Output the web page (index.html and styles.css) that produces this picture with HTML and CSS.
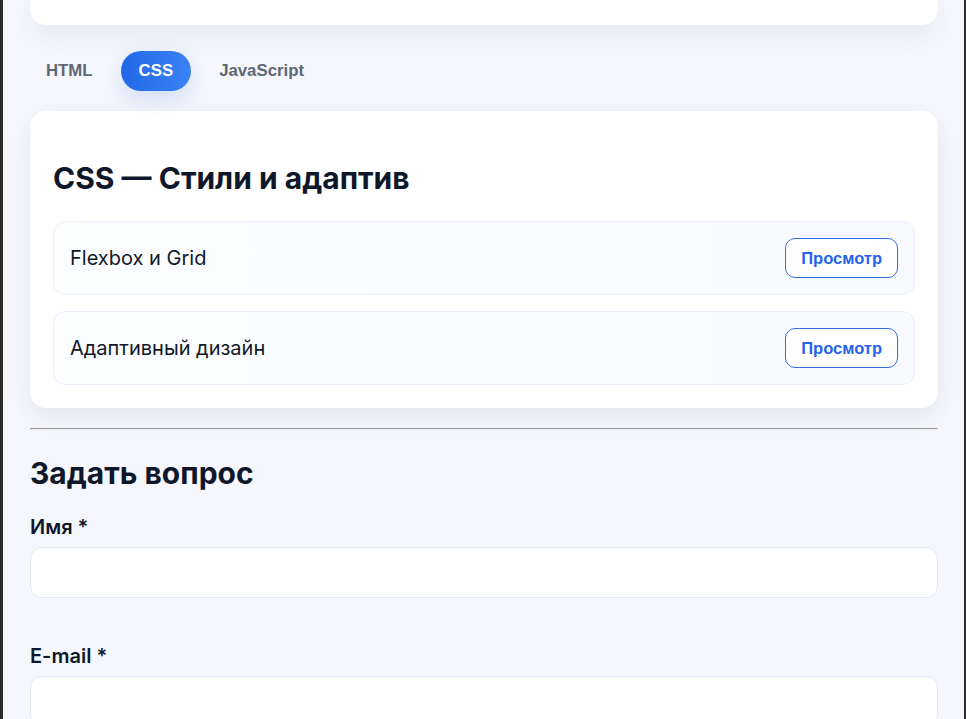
FILE: index.html
```html
<!DOCTYPE html>
<html lang="ru">
<head>
<meta charset="utf-8">
<title>Курсы</title>
<link rel="stylesheet" href="styles.css">
</head>
<body>
<div class="viewport">
  <div class="card card-prev"></div>

  <nav class="tabs">
    <button class="tab">HTML</button>
    <button class="tab tab-active">CSS</button>
    <button class="tab">JavaScript</button>
  </nav>

  <section class="card topic">
    <h2 class="topic-title">CSS — Стили и адаптив</h2>
    <ul class="lessons">
      <li class="lesson">
        <span class="lesson-name">Flexbox и Grid</span>
        <button class="btn-view">Просмотр</button>
      </li>
      <li class="lesson">
        <span class="lesson-name">Адаптивный дизайн</span>
        <button class="btn-view">Просмотр</button>
      </li>
    </ul>
  </section>

  <hr class="divider">

  <section class="ask">
    <h2 class="ask-title">Задать вопрос</h2>
    <form class="ask-form">
      <div class="field">
        <label class="field-label" for="name">Имя *</label>
        <input class="field-input" id="name" type="text">
      </div>
      <div class="field">
        <label class="field-label" for="email">E-mail *</label>
        <input class="field-input" id="email" type="email">
      </div>
    </form>
  </section>
</div>
</body>
</html>
```

FILE: styles.css
```css
html, body {
  margin: 0;
  padding: 0;
}

body {
  background: #2b2b2b;
  font-family: Inter, "Noto Sans", sans-serif;
  color: #0f172a;
}

.viewport {
  margin: 0 2px 0 3px;
  min-height: 100vh;
  background: #f5f7fc;
  padding: 0 26px 40px 27px;
  box-sizing: border-box;
}

.card {
  background: #ffffff;
  border-radius: 16px;
  box-shadow: 0 10px 28px rgba(30, 50, 100, 0.08);
}

.card-prev {
  height: 25px;
  border-radius: 0 0 16px 16px;
}

.tabs {
  display: flex;
  gap: 10px;
  margin: 26px 0 20px -2px;
}

.tab {
  font-family: "Liberation Sans", Arial, sans-serif;
  font-size: 16.8px;
  font-weight: 700;
  line-height: 18px;
  color: #5f6673;
  background: transparent;
  border: 0;
  border-radius: 20px;
  padding: 11px 18px;
  cursor: pointer;
}

.tab-active {
  color: #ffffff;
  background: linear-gradient(90deg, #2168e6, #3b82f6);
  box-shadow: 0 8px 22px rgba(37, 99, 235, 0.18);
}

.topic {
  padding: 24px 23px 23px;
}

.topic-title,
.ask-title {
  font-size: 30px;
  font-weight: 700;
  line-height: 36px;
  color: #0f172a;
  margin: 25px 0 25px;
}

.lessons {
  list-style: none;
  margin: 0;
  padding: 0;
  display: flex;
  flex-direction: column;
  gap: 16px;
}

.lesson {
  display: flex;
  align-items: center;
  justify-content: space-between;
  padding: 16px;
  border: 1px solid #eaeff9;
  border-radius: 12px;
  background: linear-gradient(90deg, #fcfdff, #f8faff);
}

.lesson-name {
  font-size: 20px;
  color: #111827;
}

.btn-view {
  font-family: "Liberation Sans", Arial, sans-serif;
  font-size: 16.5px;
  font-weight: 700;
  line-height: 18px;
  color: #2563eb;
  background: #ffffff;
  border: 1px solid #2f6fe0;
  border-radius: 10px;
  padding: 10px 15px;
  cursor: pointer;
}

.divider {
  margin: 20px 0 0;
}

.ask-title {
  margin: 25px 0 24px;
}

.ask-form {
  display: flex;
  flex-direction: column;
  gap: 46px;
}

.field {
  display: flex;
  flex-direction: column;
  gap: 8px;
}

.field-label {
  font-size: 20px;
  font-weight: 600;
  line-height: 24px;
  color: #0f172a;
}

.field-input {
  height: 51px;
  box-sizing: border-box;
  border: 1px solid #e3eaf7;
  border-radius: 12px;
  background: #ffffff;
  padding: 0 16px;
  font-family: inherit;
  font-size: 16px;
}
```
